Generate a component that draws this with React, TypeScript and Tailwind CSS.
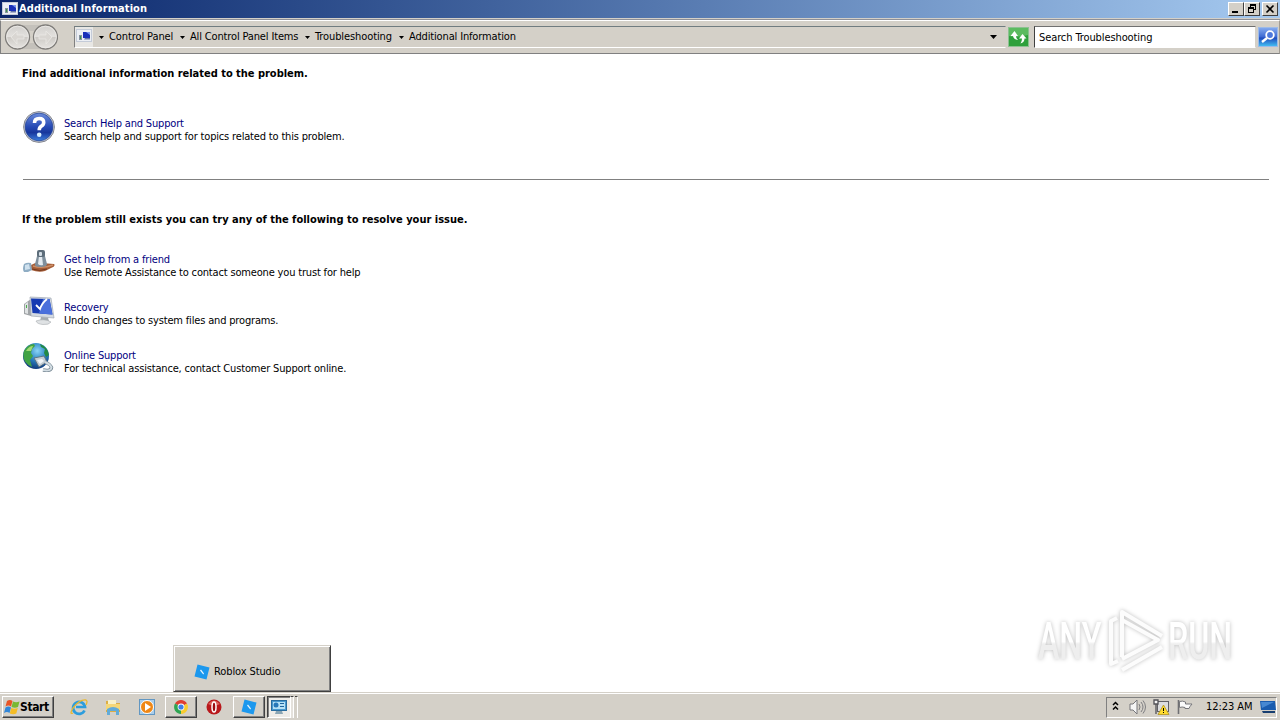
import React from 'react';

const raised = 'border border-t-white border-l-white border-r-[#404040] border-b-[#404040] bg-[#d4d0c8]';

function PanelIcon() {
  return (
    <svg width="16" height="14" viewBox="0 0 16 14" className="shrink-0">
      <rect x="0.500" y="0.500" width="15" height="12" fill="#eceff4" stroke="#c4cbd8" />
      <rect x="7" y="3" width="7" height="6" fill="#1930b8" />
      <path d="M10 3h4v3z" fill="#7a95ee" />
      <path d="M9 9h5v1.500H8z" fill="#6474a8" />
      <path d="M3 6h3v5H3z" fill="#8793a0" />
      <path d="M4 7h1v3H4z" fill="#3c9948" />
    </svg>
  );
}

function Caret() {
  return (
    <svg width="5" height="3" viewBox="0 0 5 3" className="shrink-0">
      <path d="M0 0h5L2.500 3z" fill="#000" />
    </svg>
  );
}

function TitleBar() {
  return (
    <div className="flex h-[18px] items-center bg-linear-to-r from-[#0a246a] to-[#a6caf0] pl-[2px] pr-[2px]">
      <PanelIcon />
      <span className="ml-px text-[11px] font-bold leading-[18px] tracking-[0.08px] text-white">Additional Information</span>
      <div className="ml-auto flex">
        <div className={`flex h-[14px] w-4 items-center justify-center ${raised}`}>
          <svg width="12" height="10" viewBox="0 0 12 10"><path d="M2 7h6v2H2z" fill="#000" /></svg>
        </div>
        <div className={`flex h-[14px] w-4 items-center justify-center ${raised}`}>
          <svg width="12" height="10" viewBox="0 0 12 10">
            <path d="M4 0h6v6H8V4H4zM2 3h6v6H2z" fill="#000" />
            <path d="M5 2h4v3H8V3H5zM3 5h4v3H3z" fill="#d4d0c8" />
          </svg>
        </div>
        <div className={`ml-[2px] flex h-[14px] w-4 items-center justify-center ${raised}`}>
          <svg width="12" height="10" viewBox="0 0 12 10"><path d="M2.500 1.500l7 7M9.500 1.500l-7 7" stroke="#000" strokeWidth="1.600" /></svg>
        </div>
      </div>
    </div>
  );
}

function NavButtons() {
  return (
    <svg width="54" height="28" viewBox="0 0 54 28" className="shrink-0">
      <defs>
        <linearGradient id="nav" x1="0" y1="0" x2="0" y2="1">
          <stop offset="0" stopColor="#d2d0cd" />
          <stop offset="0.5" stopColor="#e3e1de" />
          <stop offset="0.52" stopColor="#cdcac6" />
          <stop offset="1" stopColor="#e8e6e3" />
        </linearGradient>
      </defs>
      <path d="M14 2h27l-8 5q-5 2-11 0zM14 26h27l-8-5q-5-2-11 0z" fill="#c4c1bb" />
      <circle cx="13.500" cy="14" r="12" fill="url(#nav)" stroke="#7f7d7a" strokeWidth="1.300" />
      <circle cx="41.500" cy="14" r="12" fill="url(#nav)" stroke="#7f7d7a" strokeWidth="1.300" />
      <circle cx="13.500" cy="14" r="10.800" fill="none" stroke="#e9e7e4" />
      <circle cx="41.500" cy="14" r="10.800" fill="none" stroke="#e9e7e4" />
      <path d="M7 14l6-6v4h7v4h-7v5z" fill="#d9d6d2" stroke="#eae8e5" strokeWidth="0.800" />
      <path d="M48 14l-6-6v4h-7v4h7v5z" fill="#d9d6d2" stroke="#eae8e5" strokeWidth="0.800" />
    </svg>
  );
}

function AddressBar() {
  return (
    <div className="flex h-[34px] items-center border-b border-b-[#808080] border-t border-t-white border-l border-l-[#808080] border-r border-r-[#a09c94] bg-[#d4d0c8] pl-[3px]">
      <NavButtons />
      <div className="ml-4 flex h-[22px] w-[932px] items-center whitespace-nowrap border border-t-[#707c80] border-l-[#808080] border-r-[#d4d0c8] border-b-white text-[11px] tracking-[-0.1px]">
        <div className="flex h-full w-[18px] items-start justify-center bg-[#e8e7e4] pt-[2px]">
          <PanelIcon />
        </div>
        <span className="ml-[6px] flex"><Caret /></span>
        <span className="ml-[5px] w-[66px]">Control Panel</span>
        <span className="ml-[5px] flex"><Caret /></span>
        <span className="ml-[5px] w-[110px] tracking-[-0.15px]">All Control Panel Items</span>
        <span className="ml-[5px] flex"><Caret /></span>
        <span className="ml-[5px] w-[79px]">Troubleshooting</span>
        <span className="ml-[5px] flex"><Caret /></span>
        <span className="ml-[5px] tracking-[-0.15px]">Additional Information</span>
        <svg width="7" height="4" viewBox="0 0 7 4" className="ml-auto mr-[8px]"><path d="M0 0h7L3.500 4z" fill="#000" /></svg>
      </div>
      <svg width="21" height="20" viewBox="0 0 21 20" className="ml-[2px] shrink-0">
        <rect x="0.500" y="0.500" width="20" height="19" fill="#2fa03c" stroke="#8cc191" />
        <path d="M1 1h19v7Q10 11 1 9z" fill="#5cbb60" />
        <path d="M2.500 9L6.500 4 10 9H8q0 2.500 2 4-4.500-.5-5-4z" fill="#fff" />
        <path d="M18.500 11.500h-2q0 4-4 5 1.500-2 1.500-5H11L14.500 7z" fill="#fff" />
      </svg>
      <div className="ml-[5px] flex h-[22px] w-[222px] items-center border border-t-[#707070] border-l-[#404040] border-r-[#d4d0c8] border-b-white bg-white pl-[4px] pt-[3px] text-[11px] tracking-[-0.1px]">
        Search Troubleshooting
      </div>
      <svg width="20" height="20" viewBox="0 0 20 20" className="ml-[2px] shrink-0">
        <defs>
          <linearGradient id="find" x1="0" y1="0" x2="0" y2="1">
            <stop offset="0" stopColor="#86acf0" />
            <stop offset="0.500" stopColor="#3c69d2" />
            <stop offset="0.550" stopColor="#1f4abd" />
            <stop offset="1" stopColor="#45c3f4" />
          </linearGradient>
        </defs>
        <rect x="0.500" y="0.500" width="19" height="19" fill="url(#find)" stroke="#9dbbe8" />
        <path d="M9 11l-5 4" stroke="#fff" strokeWidth="2.400" />
        <circle cx="12" cy="8" r="3.800" fill="#4c78dc" stroke="#fff" strokeWidth="1.800" />
      </svg>
    </div>
  );
}

function HelpIcon() {
  return (
    <svg width="32" height="32" viewBox="0 0 32 32">
      <defs>
        <linearGradient id="help" x1="0" y1="0" x2="0" y2="1">
          <stop offset="0" stopColor="#6c8cdb" />
          <stop offset="0.500" stopColor="#2549b4" />
          <stop offset="0.700" stopColor="#17379c" />
          <stop offset="1" stopColor="#3c80e0" />
        </linearGradient>
      </defs>
      <circle cx="16" cy="16" r="15.400" fill="#c9cedb" stroke="#85878e" />
      <circle cx="16" cy="16" r="13.900" fill="url(#help)" stroke="#24428f" strokeWidth="0.700" />
      <path d="M11.500 12q0-4.500 4.700-4.500 4.500 0 4.500 4 0 2.200-2.500 3.700-2 1.200-2 4" fill="none" stroke="#fff" strokeWidth="3.600" />
      <circle cx="16.200" cy="23.800" r="2.300" fill="#d8f0ff" />
    </svg>
  );
}

function FriendIcon() {
  return (
    <svg width="32" height="32" viewBox="0 0 32 32">
      <path d="M8 18q5-3 10-2l13 1q2 2-3 4l-6 3q-6 2-14-1z" fill="#a45d38" />
      <path d="M10 19q9 3 20-1" stroke="#cc8e66" fill="none" strokeWidth="1.500" />
      <path d="M9 22q8 3 15 0" stroke="#75391f" fill="none" />
      <path d="M1 17q3-2 7-1l1 7-4 2H1q-2-3 0-8z" fill="#8fadc4" />
      <path d="M2 18l4-1 1 5-5 1z" fill="#cfe1ee" />
      <path d="M14.500 7h7l2.500 10q0 3-6.500 3t-5.500-3z" fill="#7f8f9c" />
      <path d="M16 9h3l1 9q-3 1-5-1z" fill="#e3eaf0" />
      <rect x="14" y="3" width="8" height="7" rx="2" fill="#5d6d7a" />
      <rect x="16" y="5" width="3" height="4" rx="1" fill="#d4dee6" />
    </svg>
  );
}

function RecoveryIcon() {
  return (
    <svg width="32" height="32" viewBox="0 0 32 32">
      <path d="M1 9l7-5v17l-7-2z" fill="#a0a4a7" />
      <path d="M2 9l3-2v12l-3-1z" fill="#dfe2e3" />
      <path d="M3 10h1v3H3z" fill="#4aad4b" />
      <path d="M7 2l21 1 3 20-23-2z" fill="#d4dae1" stroke="#a3aab4" strokeWidth="0.700" />
      <path d="M8 3.500l18.500.5 3 15.500-20-1.500z" fill="#173bb2" />
      <path d="M20 4l6.500 0 3 15.500-13.500-1z" fill="#4a70dc" />
      <path d="M13 10l4 4q2-6 7-10" fill="none" stroke="#fff" strokeWidth="1.800" />
      <path d="M18 22l7 .5 1 4h-9z" fill="#a5abb0" />
      <path d="M13 26q8-3 15 1-2 3-8 2.500-6-.5-7-3.500z" fill="#dfe2e4" stroke="#a7acb0" strokeWidth="0.600" />
    </svg>
  );
}

function OnlineIcon() {
  return (
    <svg width="32" height="32" viewBox="0 0 32 32">
      <defs>
        <radialGradient id="globe" cx="0.550" cy="0.300" r="0.700">
          <stop offset="0" stopColor="#8ad4f6" />
          <stop offset="0.500" stopColor="#2c86c4" />
          <stop offset="1" stopColor="#123a7c" />
        </radialGradient>
      </defs>
      <circle cx="13" cy="13" r="13" fill="url(#globe)" />
      <path d="M1 8Q5 1 11 1l1 2-3 3-1 4 2 3-3 4 2 7Q-2 19 1 8z" fill="#41a345" />
      <path d="M17 1q8 3 9 11l-3 2-2-4 1-4-4-2z" fill="#238a43" />
      <path d="M3 8q3-5 7-5l-2 5z" fill="#a0d974" />
      <path d="M11 15l10-2 3 6-8 5z" fill="#c3cdd4" stroke="#5c6f7c" strokeWidth="0.900" />
      <path d="M14 17l5-1 2 2-4 3z" fill="#f0f4f7" />
      <path d="M22 19q5 2 6.500 5.500-.5 4-8.500 2.500" fill="none" stroke="#748591" strokeWidth="3.400" />
      <path d="M22 19q5 2 6.500 5.500-.5 4-8.500 2.500" fill="none" stroke="#d3dde3" strokeWidth="2" />
    </svg>
  );
}

interface TaskProps {
  icon: React.ReactNode;
  title: string;
  description: string;
}

function Task({ icon, title, description }: TaskProps) {
  return (
    <div className="flex h-12 items-start">
      <div className="mr-[9px] h-8 w-8">{icon}</div>
      <div className="pt-[6px] text-[11px] leading-[13px] tracking-[-0.17px]">
        <a className="block text-[#000080]">{title}</a>
        <p>{description}</p>
      </div>
    </div>
  );
}

function Content() {
  return (
    <main className="relative h-[638px] bg-white pl-[23px] pr-[11px] pt-[13px]">
      <h1 className="-ml-px text-[11px] font-bold leading-[14px] tracking-[-0.02px]">Find additional information related to the problem.</h1>
      <div className="mt-[30px]">
        <Task icon={<HelpIcon />} title="Search Help and Support" description="Search help and support for topics related to this problem." />
      </div>
      <div className="mt-5 border-t border-t-[#808080]" />
      <h2 className="-ml-px mt-[33px] text-[11px] font-bold leading-[14px]">If the problem still exists you can try any of the following to resolve your issue.</h2>
      <div className="mt-5">
        <Task icon={<FriendIcon />} title="Get help from a friend" description="Use Remote Assistance to contact someone you trust for help" />
        <Task icon={<RecoveryIcon />} title="Recovery" description="Undo changes to system files and programs." />
        <Task icon={<OnlineIcon />} title="Online Support" description="For technical assistance, contact Customer Support online." />
      </div>
      <Watermark />
      <div className="absolute bottom-0 left-[173px] flex h-[47px] w-[158px] items-center border border-t-[#d4d0c8] border-l-[#d4d0c8] border-r-[#404040] border-b-[#404040] bg-[#d4d0c8] pl-[20px] pt-[6px] text-[11px] shadow-[inset_1px_1px_0_#fff,inset_-1px_-1px_0_#808080]">
        <RobloxIcon />
        <span className="ml-[4px] pt-[2px] tracking-[-0.1px]">Roblox Studio</span>
      </div>
    </main>
  );
}

function Watermark() {
  return (
    <svg width="210" height="74" viewBox="0 0 210 74" className="absolute left-[1030px] top-[550px] drop-shadow-[0_0_2px_rgba(0,0,0,0.26)]">
      <defs>
        <linearGradient id="mark" x1="0" y1="0" x2="0" y2="1">
          <stop offset="0.500" stopColor="#fff" />
          <stop offset="0.540" stopColor="#eeeeee" />
        </linearGradient>
      </defs>
      <g fill="url(#mark)" fontFamily="Roboto, sans-serif" fontSize="52" fontWeight="500">
        <text transform="translate(8 55) scale(0.620 1)">ANY</text>
        <text transform="translate(138 55) scale(0.620 1)">RUN</text>
      </g>
      <g fill="none" stroke="#fcfcfc" strokeWidth="4" strokeLinejoin="round">
        <path d="M92 53V8l40 24M92 16l36 20-36 19" />
        <path d="M87 14l-6 3v43l7-3M92 66l40-23" />
      </g>
    </svg>
  );
}

function RobloxIcon() {
  return (
    <svg width="16" height="16" viewBox="0 0 16 16" className="shrink-0">
      <path d="M3.500 0.500l12 3-3 12-12-3z" fill="#1c98ee" />
      <path d="M7 5.500l3 4-.7 1L6 6.500z" fill="#e8f6ff" />
    </svg>
  );
}

function ChromeIcon() {
  return (
    <svg width="14" height="14" viewBox="0 0 14 14">
      <path d="M7 7L1 3.500A7 7 0 0 1 13 3.500z" fill="#df3e32" />
      <path d="M7 7L1 3.500A7 7 0 0 0 7 14z" fill="#2fa552" />
      <path d="M7 7l6-3.500A7 7 0 0 1 7 14z" fill="#f8cc2f" />
      <circle cx="7" cy="7" r="3.400" fill="#fff" />
      <circle cx="7" cy="7" r="2.600" fill="#3f80e8" />
    </svg>
  );
}

function Taskbar() {
  return (
    <footer className="flex h-7 items-center border-t border-t-[#d4d0c8] bg-[#d4d0c8] pl-[2px] pr-[3px] pt-px text-[11px] shadow-[inset_0_1px_0_#fff]">
      <div className={`flex h-[22px] w-[52px] items-center pl-px shadow-[inset_-1px_-1px_0_#808080] ${raised}`}>
        <svg width="16" height="16" viewBox="0 0 16 16" className="shrink-0">
          <path d="M3 2q3-2 5.500 0L7 7.500q-2.500-2-5.500 0z" fill="#e85425" />
          <path d="M9 2.500q3 1.500 6.500 0L14 8q-3 1.500-6.500 0z" fill="#79b833" />
          <path d="M1.500 8.500q3-2 5.500 0L5.500 14q-2.500-2-5.500 0z" fill="#3186d8" />
          <path d="M7.300 9q3 1.500 6.500 0l-1.500 5.500q-3 1.500-6.500 0z" fill="#f5bd25" />
        </svg>
        <span className="text-[12px] font-bold tracking-[-0.4px]">Start</span>
      </div>
      <svg width="18" height="18" viewBox="0 0 18 18" className="ml-[16px]">
        <path d="M14.500 12.500A6 6 0 1 1 15 9H6" fill="none" stroke="#2c9ddd" strokeWidth="2.700" />
        <path d="M3 15Q-1 17 3 10 10 1 16 2q2 1 0 5" fill="none" stroke="#e9b831" strokeWidth="1.300" />
      </svg>
      <svg width="18" height="18" viewBox="0 0 18 18" className="ml-4">
        <path d="M2 3h5l1 2h8v9H2z" fill="#dcae45" />
        <path d="M4 2h8v5H4z" fill="#f8f1c9" />
        <path d="M2 6h14v6H2z" fill="#f5d777" />
        <path d="M3 11q6-4 12 0v6h-3v-4H6v4H3z" fill="#62abd8" />
      </svg>
      <svg width="18" height="18" viewBox="0 0 18 18" className="ml-4">
        <rect x="1.500" y="1.500" width="15" height="15" fill="#a9cdea" stroke="#6297c2" />
        <circle cx="9" cy="9" r="6.500" fill="#ef8715" stroke="#fff" />
        <path d="M7 5l6 4-6 4z" fill="#fff" />
      </svg>
      <div className={`ml-[9px] flex h-[22px] w-8 items-center justify-center shadow-[inset_-1px_-1px_0_#808080] ${raised}`}>
        <ChromeIcon />
      </div>
      <svg width="16" height="16" viewBox="0 0 16 16" className="ml-[9px]">
        <circle cx="8" cy="8" r="7.500" fill="#b9181b" />
        <path d="M2 5q6-7 12 0-6 3-12 0z" fill="#dc605a" />
        <ellipse cx="8" cy="8" rx="2" ry="5" fill="#9c0c10" stroke="#fff" strokeWidth="1.500" />
      </svg>
      <div className={`ml-[11px] flex h-[22px] w-8 items-center justify-center shadow-[inset_-1px_-1px_0_#808080] ${raised}`}>
        <RobloxIcon />
      </div>
      <div className="ml-[2px] flex h-[22px] w-6 items-center justify-center border border-t-[#404040] border-l-[#404040] border-r-white border-b-white bg-[#eeece8] shadow-[inset_1px_1px_0_#808080]">
        <svg width="18" height="18" viewBox="0 0 18 18">
          <rect x="1.500" y="2.500" width="15" height="10" fill="#4999cf" stroke="#286c9e" />
          <path d="M3 4h12v7H3z" fill="#b6e1f5" />
          <circle cx="6" cy="7" r="2.500" fill="#2878b8" />
          <path d="M10 5h4v1h-4zM10 8h4v1h-4z" fill="#20659e" />
          <path d="M6 13h6l1 3H5z" fill="#8aa5b4" />
        </svg>
      </div>
      <div className="h-[22px] w-[3px] border-r border-r-white border-t border-t-[#404040] bg-[#e4e1dc]" />
      <div className="ml-px h-[22px] w-[3px] border-r border-r-white border-t border-t-[#404040]" />
      <div className="ml-auto flex h-[21px] w-[171px] items-center border border-t-[#808080] border-l-[#808080] border-r-white border-b-white">
        <svg width="7" height="10" viewBox="0 0 7 10" className="mb-[2px] ml-[5px]"><path d="M1 4l2.500-2.500L6 4M1 8.500L3.500 6 6 8.500" fill="none" stroke="#000" strokeWidth="1.500" /></svg>
        <svg width="17" height="16" viewBox="0 0 17 16" className="ml-[10px]">
          <path d="M1 5h3l4-4v14l-4-4H1z" fill="#f5f5f5" stroke="#77777b" />
          <path d="M10 5q2 3 0 6M12 3q4 5 0 10M14 1.500q5 6.500 0 13" fill="none" stroke="#7e7e82" />
        </svg>
        <svg width="17" height="16" viewBox="0 0 17 16" className="ml-[7px]">
          <rect x="4.500" y="2.500" width="11" height="10" fill="#dcdddf" stroke="#606066" />
          <path d="M1 1h4v4H1zM3 5v10" fill="#f5f5f5" stroke="#515157" strokeWidth="1.300" />
          <path d="M10.500 6l5.500 9.500H5z" fill="#ffdc2e" stroke="#a98a12" strokeWidth="0.700" />
          <path d="M10 9h1v3h-1zM10 13h1v1h-1z" fill="#000" />
        </svg>
        <svg width="16" height="16" viewBox="0 0 16 16" className="ml-[7px]">
          <path d="M1.500 1v14" stroke="#6f6f73" strokeWidth="1.600" />
          <path d="M2.500 2.500q3-1 6 .5v2H15l-2 2.500-1 2H8V8.500q-3-1-5.500 0z" fill="#fafafa" stroke="#77777b" />
        </svg>
        <span className="ml-[13px] w-[48px] whitespace-nowrap pt-px tracking-[-0.05px]">12:23 AM</span>
        <svg width="16" height="14" viewBox="0 0 16 14" className="ml-[6px]">
          <path d="M0 1l15 0 1 9H1z" fill="#195caf" />
          <path d="M1 2h13L2 8z" fill="#4688d2" />
          <path d="M2 11h13v2H3z" fill="#173e70" />
        </svg>
      </div>
    </footer>
  );
}

export default function App() {
  return (
    <div className="h-[720px] w-[1280px] overflow-hidden bg-[#d4d0c8] font-['DejaVu_Sans_Condensed','DejaVu_Sans',sans-serif] text-black">
      <TitleBar />
      {/* window frame edge above the toolbar */}
      <div className="h-px bg-[#d4d0c8]" />
      <div className="h-px bg-[#8e9098]" />
      <AddressBar />
      <Content />
      <Taskbar />
    </div>
  );
}
